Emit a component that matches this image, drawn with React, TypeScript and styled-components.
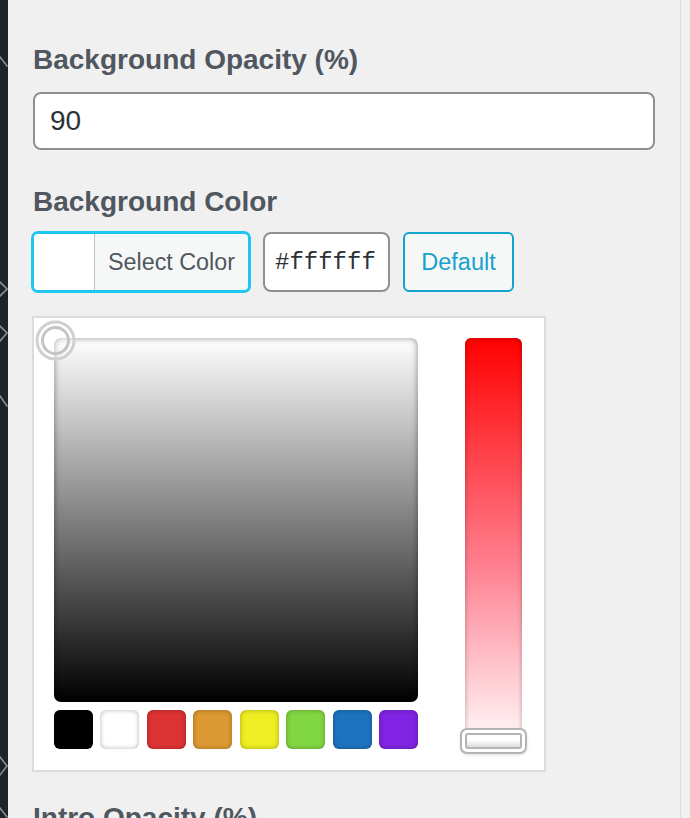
import React from "react";
import styled, { createGlobalStyle } from "styled-components";

const Global = createGlobalStyle`
  html, body { margin: 0; padding: 0; height: 818px; overflow: hidden; background: #f0f0f1; }
  #root { height: 818px; }
  * { box-sizing: border-box; }
`;

const Page = styled.div`
  display: flex;
  height: 818px;
  font-family: "Liberation Sans", Arial, sans-serif;
`;

const Rail = styled.div`
  width: 8px;
  flex: 0 0 8px;
  background: #1d2327;
  height: 100%;
`;

const Panel = styled.div`
  width: 673px;
  flex: 0 0 673px;
  border-right: 1px solid #dcdcde;
  padding: 44px 25px 0 25px;
  overflow: hidden;
`;

const Gutter = styled.div`
  flex: 1;
  background: #f1f1f2;
`;

const Field = styled.div<{ $top?: number }>`
  margin-top: ${(p) => p.$top ?? 0}px;
`;

const Label = styled.div<{ $gap?: number; $top?: number }>`
  font-size: 28px;
  line-height: 32px;
  font-weight: 700;
  color: #50575e;
  margin-top: ${(p) => p.$top ?? 0}px;
  margin-bottom: ${(p) => p.$gap ?? 0}px;
`;

const TextInput = styled.input`
  display: block;
  width: 100%;
  height: 58px;
  border: 2px solid #8c8f94;
  border-radius: 8px;
  background: #fff;
  padding: 0 15px;
  font-family: "Liberation Sans", Arial, sans-serif;
  font-size: 28px;
  color: #2c3338;
  outline: none;
`;

const ColorRow = styled.div`
  display: flex;
  align-items: center;
  gap: 12px;
  margin-left: -2px;
`;

const SelectButton = styled.button`
  display: flex;
  align-items: stretch;
  width: 220px;
  height: 62px;
  padding: 0;
  border: 3px solid #1ec6f2;
  border-radius: 7px;
  background: #f6f7f7;
  overflow: hidden;
  cursor: pointer;
`;

const CurrentSwatch = styled.span<{ $color: string }>`
  width: 61px;
  flex: 0 0 61px;
  background: ${(p) => p.$color};
  border-right: 1px solid #c3c4c7;
`;

const SelectText = styled.span`
  display: flex;
  align-items: center;
  padding-left: 13px;
  font-family: "Liberation Sans", Arial, sans-serif;
  font-size: 23.3px;
  color: #50575e;
  white-space: nowrap;
`;

const HexInput = styled.input`
  width: 127px;
  height: 60px;
  border: 2px solid #8c8f94;
  border-radius: 8px;
  background: #fff;
  padding: 0 0 0 10px;
  font-family: "Liberation Mono", "Courier New", monospace;
  font-size: 24px;
  color: #2c3338;
  outline: none;
`;

const DefaultButton = styled.button`
  width: 111px;
  height: 60px;
  margin-left: 1px;
  border: 2px solid #12a3cf;
  border-radius: 6px;
  background: #f6f7f7;
  font-family: "Liberation Sans", Arial, sans-serif;
  font-size: 23.5px;
  color: #16a2cc;
  padding: 0;
  cursor: pointer;
`;

const Picker = styled.div`
  display: grid;
  grid-template-columns: 364px 57px;
  column-gap: 47px;
  align-items: start;
  width: 514px;
  margin: 23px 0 0 -1px;
  padding: 20px 22px 17px 20px;
  background: #fff;
  border: 2px solid #dcdcde;
`;

const SquareCol = styled.div`
  display: flex;
  flex-direction: column;
  gap: 8px;
`;

const Square = styled.div`
  position: relative;
  width: 364px;
  height: 364px;
  border-radius: 7px;
  background: linear-gradient(to bottom, #ffffff 0%, #808080 50%, #000000 100%);
  box-shadow: inset 0 0 6px rgba(0, 0, 0, 0.45);
`;

const Handle = styled.svg`
  position: absolute;
  left: -20px;
  top: -19px;
  width: 43px;
  height: 43px;
`;

const Palette = styled.div`
  display: flex;
  justify-content: space-between;
`;

const PaletteSwatch = styled.span<{ $color: string }>`
  width: 39px;
  height: 39px;
  border-radius: 6px;
  background: ${(p) => p.$color};
  box-shadow: inset 0 0 5px rgba(0, 0, 0, 0.3);
`;

const Strip = styled.div`
  position: relative;
  width: 57px;
  height: 415px;
  border-radius: 6px;
  background: linear-gradient(to bottom, #ff0000 0%, #ff8090 55%, #ffffff 100%);
  box-shadow: inset 0 0 5px rgba(0, 0, 0, 0.3);
`;

const StripHandle = styled.div`
  position: absolute;
  left: -5px;
  top: 390px;
  width: 67px;
  height: 26px;
  padding: 3px;
  border: 2px solid #b4b4b4;
  border-radius: 7px;
  background: #fff;
  box-shadow: 0 1px 3px rgba(0, 0, 0, 0.12);
`;

const StripHandleBar = styled.div`
  height: 100%;
  border: 2px solid #b4b4b4;
  border-radius: 3px;
  background: linear-gradient(to bottom, #ffffff 40%, #dcdcdc 100%);
`;

const palette = ["#000000", "#ffffff", "#dd3333", "#dd9933", "#eeee22", "#81d742", "#1e73be", "#8224e3"];

const RailMarks = () => (
  <svg width="8" height="818" viewBox="0 0 8 818">
    <g stroke="#8c8f94" strokeWidth="1.6" fill="none" strokeLinecap="square">
      <path d="M0 57 L7 66" />
      <path d="M0 282 L7 289 L0 296" />
      <path d="M0 326 L7 333 L0 341" />
      <path d="M0 396 L7 406" />
      <path d="M0 757 L7 766 L0 775" />
      <path d="M0 808 L7 817" />
    </g>
  </svg>
);

export default function App() {
  return (
    <>
      <Global />
      <Page>
        <Rail>
          <RailMarks />
        </Rail>
        <Panel>
          <Field>
            <Label $gap={16}>Background Opacity (%)</Label>
            <TextInput value="90" readOnly />
          </Field>
          <Field $top={36}>
            <Label $gap={13}>Background Color</Label>
            <ColorRow>
              <SelectButton>
                <CurrentSwatch $color="#ffffff" />
                <SelectText>Select Color</SelectText>
              </SelectButton>
              <HexInput value="#ffffff" readOnly />
              <DefaultButton>Default</DefaultButton>
            </ColorRow>
            <Picker>
              <SquareCol>
                <Square>
                  <Handle viewBox="0 0 43 43">
                    <circle cx="21.5" cy="21.5" r="18.5" fill="rgba(255,255,255,0.3)" stroke="#d0d0d0" strokeWidth="3" />
                    <circle cx="21.5" cy="21.5" r="13" fill="none" stroke="#c4c4c4" strokeWidth="3" />
                  </Handle>
                </Square>
                <Palette>
                  {palette.map((c) => (
                    <PaletteSwatch key={c} $color={c} />
                  ))}
                </Palette>
              </SquareCol>
              <Strip>
                <StripHandle>
                  <StripHandleBar />
                </StripHandle>
              </Strip>
            </Picker>
          </Field>
          <Label $top={30}>Intro Opacity (%)</Label>
        </Panel>
        <Gutter />
      </Page>
    </>
  );
}
